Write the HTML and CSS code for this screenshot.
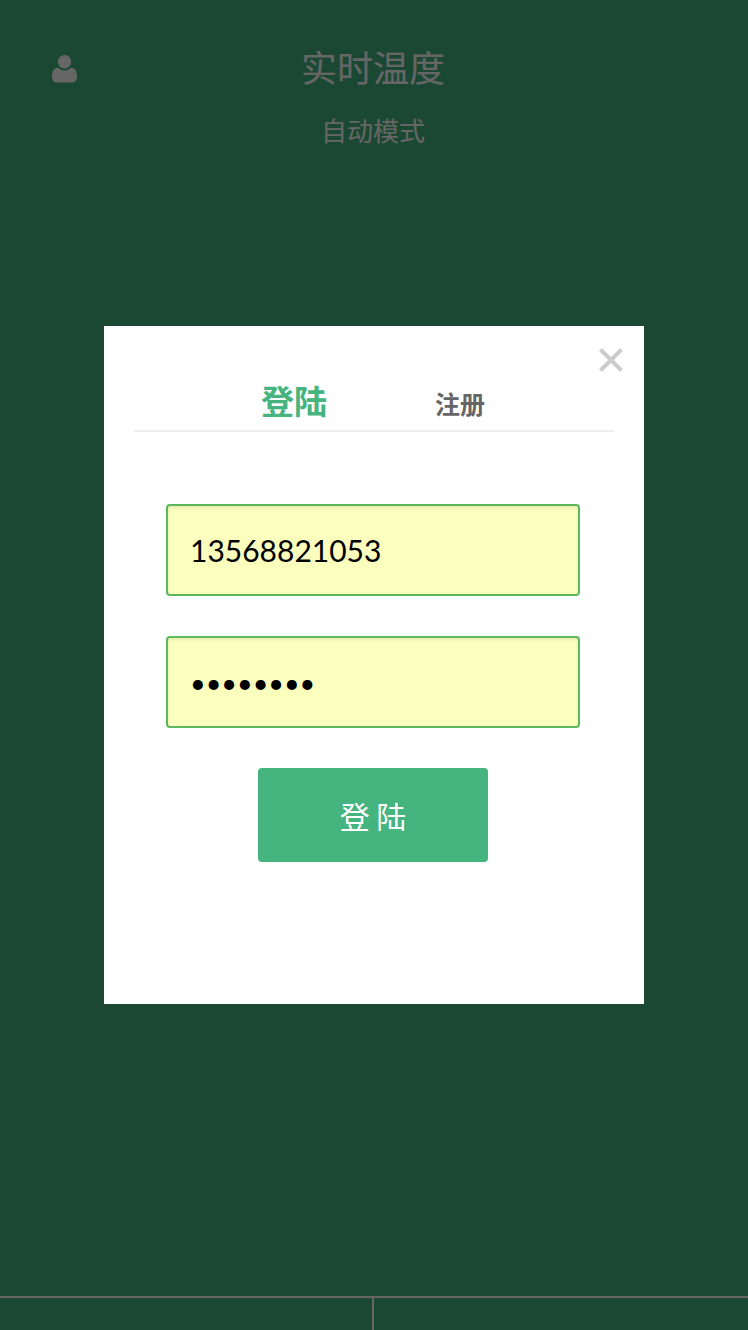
FILE: index.html
```html
<!DOCTYPE html>
<html lang="zh-CN">
<head>
<meta charset="utf-8">
<meta name="viewport" content="width=device-width, initial-scale=1">
<title>实时温度</title>
<link rel="stylesheet" href="styles.css">
</head>
<body>
<div class="page">
  <header class="header">
    <button class="user" type="button" aria-label="用户">
      <svg class="user-icon" viewBox="0 0 26 28" aria-hidden="true"><circle cx="12.500" cy="6.700" r="6.700"/><path d="M5.800 12.800C1.500 12.800 0 17 0 22c0 3.500 2 5.500 5 5.500h15c3 0 5-2 5-5.500 0-5-1.500-9.200-5.800-9.200a9.500 9.500 0 0 1-13.400 0z"/></svg>
    </button>
    <div class="heading">
      <h1 class="title">实时温度</h1>
      <p class="mode">自动模式</p>
    </div>
  </header>
  <footer class="footer">
    <div class="footer-cell"></div>
    <div class="footer-cell"></div>
  </footer>
</div>
<div class="overlay">
  <section class="modal" role="dialog" aria-modal="true" aria-label="登陆">
    <button class="close" type="button" aria-label="关闭">
      <svg class="close-icon" viewBox="0 0 24 24" aria-hidden="true"><path d="M1.500 1.500L22.500 22.500M22.500 1.500L1.500 22.500"/></svg>
    </button>
    <nav class="tabs">
      <button class="tab tab-active" type="button">登陆</button>
      <button class="tab" type="button">注册</button>
    </nav>
    <form class="form">
      <input class="field" type="tel" aria-label="手机号" value="13568821053">
      <input class="field field-password" type="password" aria-label="密码" value="12345678">
      <button class="submit" type="button">登 陆</button>
    </form>
  </section>
</div>
</body>
</html>
```
FILE: styles.css
```css
* {
  box-sizing: border-box;
}

body {
  margin: 0;
  background: #45b47e;
  font-family: "Noto Sans CJK SC", sans-serif;
}

button {
  padding: 0;
  border: 0;
  background: none;
  font-family: inherit;
  cursor: pointer;
}

.page {
  display: flex;
  flex-direction: column;
  justify-content: space-between;
  min-height: 100vh;
  color: #fff;
}

.header {
  display: grid;
  grid-template-columns: 26px 1fr 28px;
  align-items: start;
  padding: 42px 52px 0;
}

.user {
  display: flex;
  align-items: center;
  height: 54px;
}

.user-icon {
  width: 26px;
  height: 28px;
  fill: #fff;
}

.heading {
  text-align: center;
}

.title {
  margin: 0;
  font-size: 36px;
  line-height: 48px;
  font-weight: 400;
}

.mode {
  margin: 22px 0 0;
  font-size: 26px;
  line-height: 36px;
}

.footer {
  display: grid;
  grid-template-columns: 1fr 1fr;
  height: 34px;
  border-top: 2px solid #fff;
}

.footer-cell:first-child {
  border-right: 2px solid #fff;
}

.overlay {
  position: fixed;
  inset: 0;
  display: flex;
  align-items: center;
  justify-content: center;
  background: rgba(0, 0, 0, 0.6);
}

.modal {
  position: relative;
  width: 540px;
  max-width: 100%;
  padding: 49px 30px 142px;
  background: #fff;
}

.close {
  position: absolute;
  top: 22px;
  right: 21px;
  display: flex;
}

.close-icon {
  width: 24px;
  height: 24px;
  fill: none;
  stroke: #ccc;
  stroke-width: 4;
}

.tabs {
  display: flex;
  align-items: baseline;
  justify-content: center;
  gap: 108px;
  padding: 0 2px 2px 0;
  border-bottom: 2px solid #ededed;
}

.tab {
  color: #666;
  font-size: 25px;
  line-height: 50px;
  font-weight: 700;
}

.tab-active {
  color: #45b47e;
  font-size: 33px;
}

.form {
  display: flex;
  flex-direction: column;
  align-items: center;
  gap: 40px;
  padding: 72px 34px 0 32px;
}

.field {
  width: 100%;
  height: 92px;
  padding: 0 22px;
  border: 2px solid #5cb85c;
  border-radius: 4px;
  outline: 0;
  background: #faffbd;
  box-shadow: inset 0 2px 3px rgba(0, 0, 0, 0.07);
  color: #000;
  font-family: Lato, sans-serif;
  font-size: 30px;
}

.field-password {
  font-size: 27px;
}

.submit {
  width: 230px;
  height: 94px;
  border-radius: 4px;
  background: #45b47e;
  color: #fff;
  font-size: 30px;
  line-height: 40px;
}
```
